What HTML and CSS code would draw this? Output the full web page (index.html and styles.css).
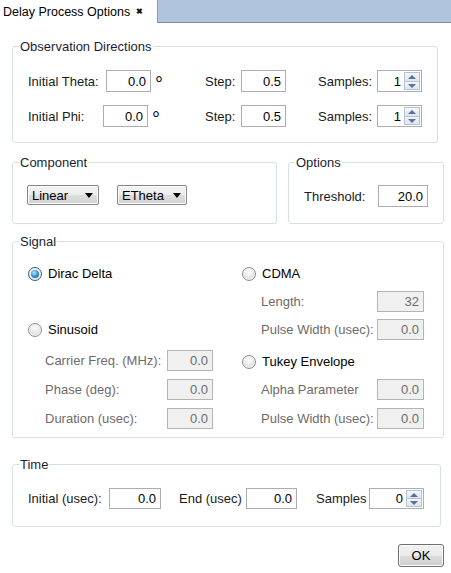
FILE: index.html
```html
<!DOCTYPE html>
<html>
<head>
<meta charset="utf-8">
<title>Delay Process Options</title>
<link rel="stylesheet" href="styles.css">
</head>
<body>
<div class="tabbar">
  <div class="tab"><span class="tab-title">Delay Process Options</span><span class="tab-close">✖</span></div>
  <div class="tab-fill"></div>
</div>
<div class="content">
  <fieldset class="group obs">
    <legend>Observation Directions</legend>
    <div class="obs-body">
      <div class="obs-row">
        <span class="lbl lbl-theta">Initial Theta:</span>
        <span class="field f-obs">0.0</span>
        <span class="deg deg-theta">°</span>
        <span class="lbl lbl-step">Step:</span>
        <span class="field f-obs">0.5</span>
        <span class="lbl lbl-samples">Samples:</span>
        <span class="spin s-obs"><span class="spin-val">1</span><span class="spin-btns"><span class="spin-up"></span><span class="spin-down"></span></span></span>
      </div>
      <div class="obs-row">
        <span class="lbl lbl-phi">Initial Phi:</span>
        <span class="field f-obs">0.0</span>
        <span class="deg deg-phi">°</span>
        <span class="lbl lbl-step">Step:</span>
        <span class="field f-obs">0.5</span>
        <span class="lbl lbl-samples">Samples:</span>
        <span class="spin s-obs"><span class="spin-val">1</span><span class="spin-btns"><span class="spin-up"></span><span class="spin-down"></span></span></span>
      </div>
    </div>
  </fieldset>

  <div class="pair">
    <fieldset class="group component">
      <legend>Component</legend>
      <div class="component-body">
        <span class="combo c-linear"><span>Linear</span><span class="combo-arrow"></span></span>
        <span class="combo c-etheta"><span>ETheta</span><span class="combo-arrow"></span></span>
      </div>
    </fieldset>
    <fieldset class="group options">
      <legend>Options</legend>
      <div class="options-body">
        <span class="lbl lbl-threshold">Threshold:</span>
        <span class="field f-threshold">20.0</span>
      </div>
    </fieldset>
  </div>

  <fieldset class="group signal">
    <legend>Signal</legend>
    <div class="signal-body">
      <div class="sig-cell left r1"><span class="radio checked"></span><span class="radio-text">Dirac Delta</span></div>
      <div class="sig-cell right r1"><span class="radio"></span><span class="radio-text">CDMA</span></div>

      <div class="sig-cell right r2 sub"><span class="lbl dis lbl-sr">Length:</span><span class="field dis f-sr">32</span></div>

      <div class="sig-cell left r3"><span class="radio"></span><span class="radio-text">Sinusoid</span></div>
      <div class="sig-cell right r3 sub"><span class="lbl dis lbl-sr">Pulse Width (usec):</span><span class="field dis f-sr">0.0</span></div>

      <div class="sig-cell left r4 sub"><span class="lbl dis lbl-sl">Carrier Freq. (MHz):</span><span class="field dis f-sl">0.0</span></div>
      <div class="sig-cell right r4 tukey"><span class="radio"></span><span class="radio-text">Tukey Envelope</span></div>

      <div class="sig-cell left r5 sub"><span class="lbl dis lbl-sl">Phase (deg):</span><span class="field dis f-sl">0.0</span></div>
      <div class="sig-cell right r5 sub"><span class="lbl dis lbl-sr">Alpha Parameter</span><span class="field dis f-sr">0.0</span></div>

      <div class="sig-cell left r6 sub"><span class="lbl dis lbl-sl">Duration (usec):</span><span class="field dis f-sl">0.0</span></div>
      <div class="sig-cell right r6 sub"><span class="lbl dis lbl-sr">Pulse Width (usec):</span><span class="field dis f-sr">0.0</span></div>
    </div>
  </fieldset>

  <fieldset class="group time">
    <legend>Time</legend>
    <div class="time-body">
      <span class="lbl lbl-tinit">Initial (usec):</span>
      <span class="field f-tinit">0.0</span>
      <span class="lbl lbl-tend">End (usec)</span>
      <span class="field f-tend">0.0</span>
      <span class="lbl lbl-tsamp">Samples</span>
      <span class="spin s-time"><span class="spin-val">0</span><span class="spin-btns"><span class="spin-up"></span><span class="spin-down"></span></span></span>
    </div>
  </fieldset>

  <div class="actions"><button class="ok">OK</button></div>
</div>
</body>
</html>
```

FILE: styles.css
```css
* { box-sizing: border-box; }
html, body { margin: 0; padding: 0; background: #ffffff; }
body {
  width: 451px;
  height: 573px;
  overflow: hidden;
  font-family: "Liberation Sans", Arial, sans-serif;
  font-size: 13px;
  color: #1a1a1a;
}

/* tab bar */
.tabbar { display: flex; height: 23px; }
.tab {
  width: 157px;
  background: #ffffff;
  display: flex;
  align-items: center;
  padding-left: 3px;
  color: #000;
}
.tab-title { font-size: 12.5px; line-height: 16px; }
.tab-close { margin-left: 6px; font-size: 8px; font-weight: bold; line-height: 8px; color: #111; }
.tab-fill {
  flex: 1;
  background: #b0c4de;
  border-left: 1px solid #8d9bab;
  border-bottom: 1px solid #7f8b99;
}

/* layout */
.content {
  display: flex;
  flex-direction: column;
  align-items: flex-start;
  padding: 15px 0 0 12px;
}

.group {
  margin: 0;
  padding: 0;
  min-width: 0;
  border: 1px solid #d5dfe5;
  border-radius: 3px;
}
.group legend {
  margin-left: 6px;
  padding: 1px 1px 0;
  line-height: 15px;
  font-size: 13px;
  color: #1a1d33;
}

.lbl { display: inline-block; white-space: nowrap; flex: none; }
.lbl.dis { color: #6f6a6a; }

.field {
  display: flex;
  align-items: center;
  justify-content: flex-end;
  flex: none;
  padding-right: 4px;
  border: 1px solid #abadb3;
  background: #ffffff;
  color: #000;
}
.field.dis { background: #f0f0f0; border-color: #b4b4b4; color: #6d6d6d; }

/* spin box */
.spin {
  display: flex;
  align-items: center;
  justify-content: flex-end;
  flex: none;
  border: 1px solid #abadb3;
  background: #fff;
  color: #000;
  padding: 1px;
}
.spin-val { padding-right: 3px; }
.spin-btns {
  display: flex;
  flex-direction: column;
  width: 16px;
  height: 100%;
}
.spin-up, .spin-down {
  flex: 1;
  position: relative;
  background: linear-gradient(#f3f6fb, #dde5f0);
  border: 1px solid #b7c2d2;
}
.spin-down { border-top: none; }
.spin-up::after, .spin-down::after {
  content: "";
  position: absolute;
  left: 3px;
  width: 0;
  height: 0;
  border-left: 4px solid transparent;
  border-right: 4px solid transparent;
}
.spin-up::after { top: 2px; border-bottom: 4px solid #5a6f9a; }
.spin-down::after { top: 2px; border-top: 4px solid #5a6f9a; }

/* observation directions */
.obs { width: 426px; }
.obs-body { padding: 16px 0 15px 15px; display: flex; flex-direction: column; gap: 13px; }
.obs-row { display: flex; align-items: center; height: 22px; }
.lbl-theta { width: 78px; }
.lbl-phi { width: 75px; }
.f-obs { width: 45px; height: 22px; }
.deg {
  display: inline-block;
  flex: none;
  align-self: flex-start;
  font-size: 20px;
  line-height: 20px;
  padding-top: 4px;
  color: #111;
}
.deg-theta { margin-left: 4px; width: 50px; }
.deg-phi { margin-left: 4px; width: 53px; }
.lbl-step { width: 36px; }
.lbl-samples { width: 59px; margin-left: 32px; }
.s-obs { width: 45px; height: 22px; }

/* component / options */
.pair { display: flex; gap: 11px; margin-top: 11px; }
.component { width: 265px; }
.component-body { padding: 15px 0 16px 14px; display: flex; align-items: flex-start; gap: 18px; height: 53px; }
.combo {
  display: flex;
  align-items: center;
  justify-content: space-between;
  height: 20px;
  padding: 0 5px 0 4px;
  border: 1px solid #868686;
  border-radius: 2px;
  background: linear-gradient(#f4f4f4, #ececec 50%, #dedede 50%, #d2d2d2);
  box-shadow: inset 0 0 0 1px #fbfbfb;
  color: #000;
}
.c-linear { width: 72px; }
.c-etheta { width: 70px; }
.combo-arrow {
  width: 0;
  height: 0;
  border-left: 4px solid transparent;
  border-right: 4px solid transparent;
  border-top: 5px solid #000;
}
.options { width: 156px; }
.options-body { padding: 15px 0 16px 15px; display: flex; align-items: center; height: 53px; }
.lbl-threshold { width: 74px; }
.f-threshold { width: 50px; height: 22px; }

/* signal */
.signal { width: 432px; margin-top: 9px; }
.signal-body {
  display: grid;
  grid-template-columns: 214px 190px;
  grid-template-rows: 28px 28px 31px 29px 29px 21px;
  padding: 14px 0 8px 15px;
}
.sig-cell { display: flex; align-items: center; height: 21px; }
.left { grid-column: 1; }
.right { grid-column: 2; }
.r1 { grid-row: 1; }
.r2 { grid-row: 2; }
.r3 { grid-row: 3; }
.r4 { grid-row: 4; }
.r5 { grid-row: 5; }
.r6 { grid-row: 6; }
.tukey { margin-top: 1px; }
.left.sub { padding-left: 17px; }
.right.sub { padding-left: 19px; }
.lbl-sl { width: 122px; }
.lbl-sr { width: 116px; }
.f-sl { width: 46px; height: 21px; }
.f-sr { width: 47px; height: 21px; }

.radio {
  position: relative;
  flex: none;
  width: 14px;
  height: 14px;
  border-radius: 50%;
  border: 1px solid #8e8f8f;
  background: radial-gradient(circle at 50% 35%, #fdfdfd 0%, #e8e8e8 50%, #c9c9c9 100%);
  box-shadow: inset 0 0 0 1px #f6f6f6;
}
.radio.checked { border-color: #3c5b7a; }
.radio.checked::after {
  content: "";
  position: absolute;
  left: 2px;
  top: 2px;
  width: 8px;
  height: 8px;
  border-radius: 50%;
  background: radial-gradient(circle at 40% 35%, #b8ecff 0%, #3b9fdc 45%, #0c4d84 100%);
}
.radio-text { margin-left: 6px; color: #000; }

/* time */
.time { width: 429px; margin-top: 18px; }
.time-body { padding: 16px 0 17px 15px; display: flex; align-items: center; }
.lbl-tinit { width: 81px; }
.f-tinit { width: 52px; height: 21px; }
.lbl-tend { width: 67px; margin-left: 18px; }
.f-tend { width: 51px; height: 21px; }
.lbl-tsamp { width: 53px; margin-left: 19px; }
.s-time { width: 55px; height: 21px; }

/* ok */
.actions { align-self: stretch; display: flex; justify-content: flex-end; padding-right: 7px; margin-top: 17px; }
.ok {
  width: 46px;
  height: 23px;
  padding: 0;
  font-family: "Liberation Sans", Arial, sans-serif;
  font-size: 13px;
  color: #000;
  border: 1px solid #707070;
  border-radius: 3px;
  background: linear-gradient(#f2f2f2, #ebebeb 50%, #dddddd 50%, #cfcfcf);
  box-shadow: inset 0 0 0 1px #fcfcfc;
}
```
